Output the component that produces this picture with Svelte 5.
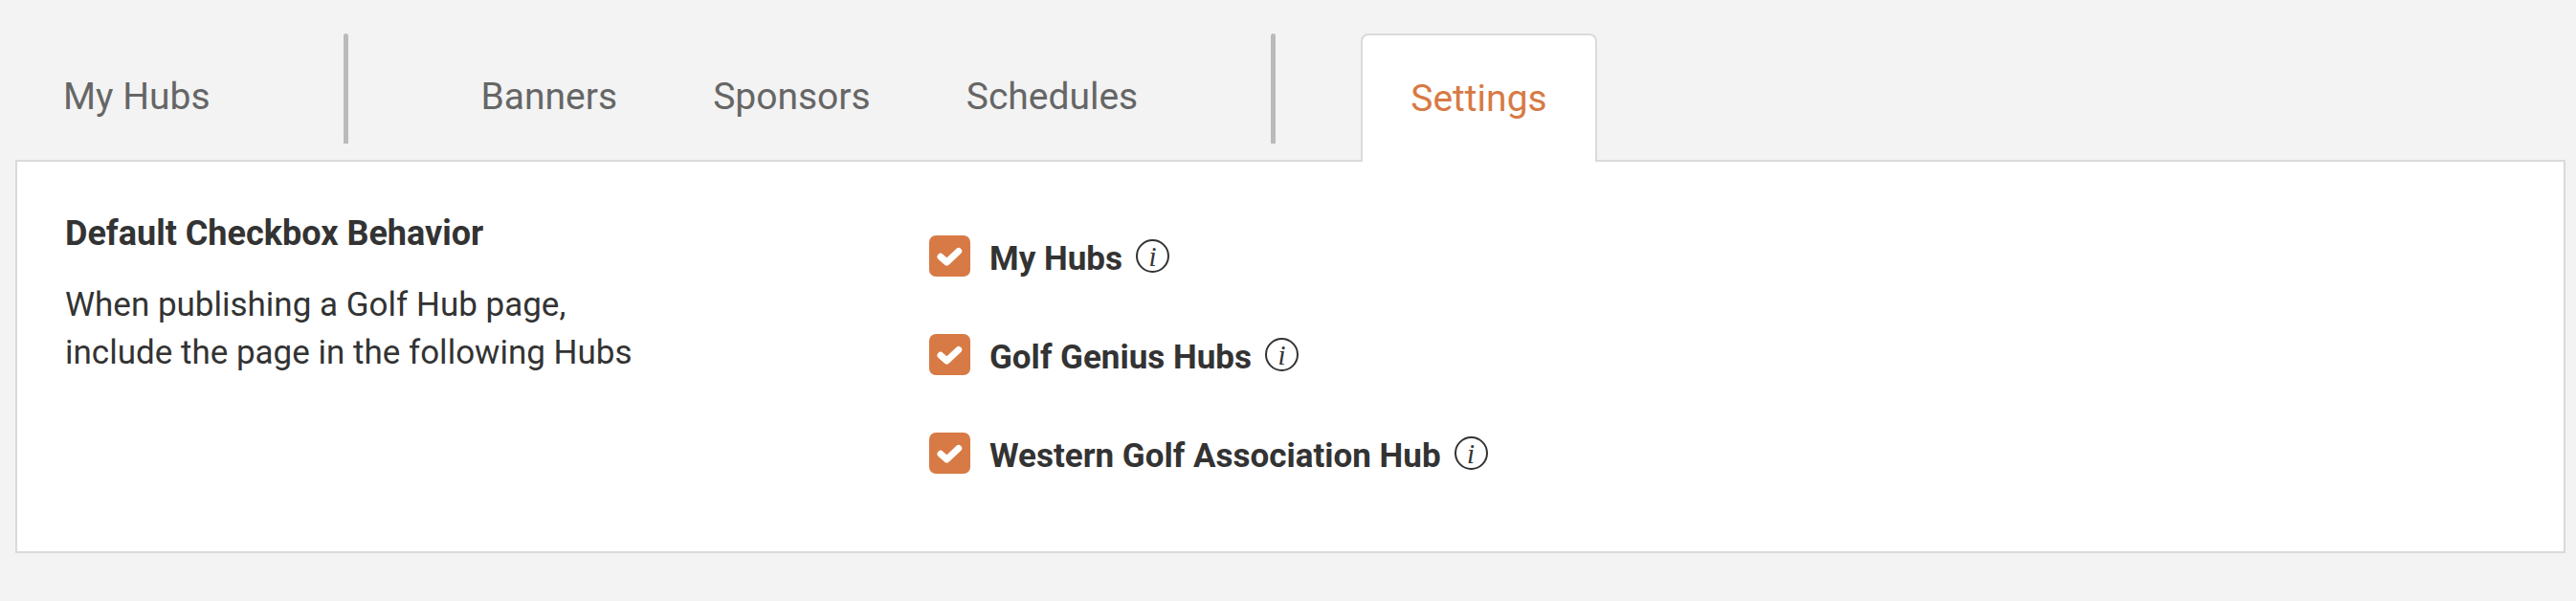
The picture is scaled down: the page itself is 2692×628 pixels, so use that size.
<script>
	let activeTab = 'Settings';

	const tabGroups = [
		['My Hubs'],
		['Banners', 'Sponsors', 'Schedules'],
		['Settings']
	];

	let hubs = [
		{ id: 'my-hubs', label: 'My Hubs', checked: true },
		{ id: 'golf-genius-hubs', label: 'Golf Genius Hubs', checked: true },
		{ id: 'association-hub', label: 'Western Golf Association Hub', checked: true }
	];
</script>

<svelte:head>
	<title>Golf Hub Settings</title>
</svelte:head>

<div class="page">
	<nav class="tabs">
		{#each tabGroups as group, i}
			{#if i > 0}
				<span class="divider"></span>
			{/if}
			{#each group as tab}
				<a
					href="#{tab.toLowerCase().replace(' ', '-')}"
					class="tab"
					class:active={tab === activeTab}
					on:click={() => (activeTab = tab)}>{tab}</a
				>
			{/each}
		{/each}
	</nav>

	<main class="panel">
		<section class="intro">
			<h2>Default Checkbox Behavior</h2>
			<p>When publishing a Golf Hub page,<br />include the page in the following Hubs</p>
		</section>

		<div class="options">
			{#each hubs as hub}
				<div class="option">
					<span class="checkbox">
						<input type="checkbox" id={hub.id} bind:checked={hub.checked} />
						{#if hub.checked}
							<svg viewBox="0 0 43 43" aria-hidden="true">
								<path d="M12 22.3 L18.5 28 L30.7 16.5" />
							</svg>
						{/if}
					</span>
					<label for={hub.id}>{hub.label}</label>
					<button type="button" class="info" aria-label="About {hub.label}">i</button>
				</div>
			{/each}
		</div>
	</main>
</div>

<style>
	:global(body) {
		background: #f3f3f3;
	}

	.page {
		padding: 35px 11px 50px 16px;
		color: #333;
		font-family: 'Proxima Nova', Roboto, sans-serif;
		font-size: 35px;
		line-height: 50px;
	}

	.tabs {
		display: flex;
		align-items: flex-start;
	}

	.tab {
		box-sizing: border-box;
		height: 134px;
		margin-bottom: -2px;
		padding: 41px 50px;
		color: #666;
		font-size: 39px;
		text-decoration: none;
	}

	.tab.active {
		border: 2px solid #dadada;
		border-bottom: none;
		border-radius: 8px 8px 0 0;
		background: #fff;
		color: #d77a45;
	}

	.divider {
		width: 5px;
		height: 115px;
		margin: 0 89px;
		border-radius: 3px 3px 0 0;
		background: #bababa;
	}

	.panel {
		display: grid;
		grid-template-columns: 1fr 2fr;
		column-gap: 74px;
		padding: 50px 50px 81px;
		border: 2px solid #dadada;
		background: #fff;
	}

	h2 {
		margin: 0 0 25px;
		font-size: 36px;
		font-weight: 700;
	}

	p {
		margin: 0;
	}

	.options {
		display: flex;
		flex-direction: column;
		gap: 60px;
		padding-top: 27px;
	}

	.option {
		display: flex;
		align-items: center;
		height: 43px;
	}

	.checkbox {
		display: grid;
		width: 43px;
		height: 43px;
		margin-right: 20px;
	}

	.checkbox input,
	.checkbox svg {
		grid-area: 1 / 1;
		width: 43px;
		height: 43px;
		margin: 0;
	}

	.checkbox input {
		appearance: none;
		border-radius: 7px;
		background: #fff;
		box-shadow: inset 0 0 0 2px #bababa;
		cursor: pointer;
	}

	.checkbox input:checked {
		background: #d77a45;
		box-shadow: none;
	}

	.checkbox svg {
		fill: none;
		stroke: #fff;
		stroke-width: 7;
		stroke-linejoin: round;
		stroke-linecap: round;
		pointer-events: none;
	}

	label {
		padding-top: 6px;
		font-weight: 700;
	}

	.info {
		width: 35px;
		height: 35px;
		margin-left: 14px;
		padding: 0;
		border: 2px solid #333;
		border-radius: 50%;
		background: none;
		color: #333;
		font: italic 29px/30px 'Liberation Serif', serif;
		cursor: pointer;
	}
</style>
